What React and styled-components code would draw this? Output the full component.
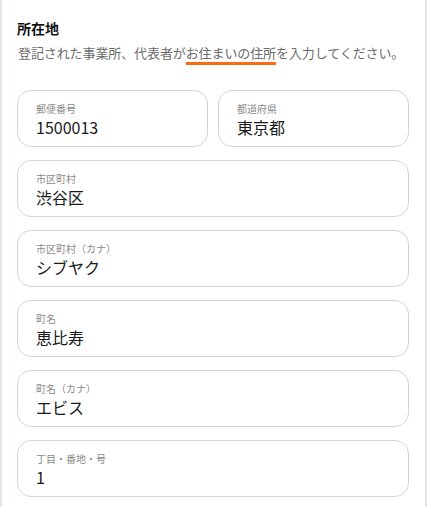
import React from 'react';
import styled, { createGlobalStyle } from 'styled-components';

const GlobalStyle = createGlobalStyle`
  html, body {
    margin: 0;
    padding: 0;
    background: #fff;
  }
  body {
    font-family: "Noto Sans CJK JP", "Noto Sans", sans-serif;
    color: #1a1a1a;
  }
`;

const fields = [
  [
    { label: '郵便番号', value: '1500013' },
    { label: '都道府県', value: '東京都' },
  ],
  [{ label: '市区町村', value: '渋谷区' }],
  [{ label: '市区町村（カナ）', value: 'シブヤク' }],
  [{ label: '町名', value: '恵比寿' }],
  [{ label: '町名（カナ）', value: 'エビス' }],
  [{ label: '丁目・番地・号', value: '1' }],
];

const App = () => {
  return (
    <>
      <GlobalStyle />
      <Panel>
        <Title>所在地</Title>
        <Lead>
          登記された事業所、代表者が<Mark>お住まいの住所</Mark>を入力してください。
        </Lead>
        <Form>
          {fields.map((row, i) => (
            <Row key={i} $cols={row.length}>
              {row.map((f) => (
                <Field key={f.label}>
                  <Label>{f.label}</Label>
                  <Value>{f.value}</Value>
                </Field>
              ))}
            </Row>
          ))}
        </Form>
      </Panel>
    </>
  );
};

export default App;

const Panel = styled.section`
  box-sizing: border-box;
  width: 427px;
  min-height: 507px;
  padding: 18px 16px 20px 15px;
  border-left: 2px solid #e4e6ee;
  border-right: 2px solid #e4e6ee;
  background: #fff;
`;

const Title = styled.h2`
  margin: 0;
  font-size: 14px;
  line-height: 20px;
  font-weight: 700;
  color: #111;
`;

const Lead = styled.p`
  margin: 4px 0 0 1px;
  font-size: 13px;
  line-height: 22px;
  letter-spacing: -0.1px;
  color: #6b6b6b;
  white-space: nowrap;
`;

const Mark = styled.span`
  border-bottom: 3px solid #ff6a10;
`;

const Form = styled.div`
  display: flex;
  flex-direction: column;
  gap: 13px;
  margin-top: 26px;
`;

const Row = styled.div`
  display: grid;
  grid-template-columns: repeat(${(p) => p.$cols}, 1fr);
  column-gap: 10px;
`;

const Field = styled.div`
  box-sizing: border-box;
  height: 57px;
  padding: 11px 18px 6px 18px;
  border: 1px solid #d4d4d4;
  border-radius: 14px;
  background: #fff;
`;

const Label = styled.div`
  font-size: 10px;
  line-height: 14px;
  color: #8a8a8a;
`;

const Value = styled.div`
  font-size: 16px;
  line-height: 22px;
  color: #1a1a1a;
`;
